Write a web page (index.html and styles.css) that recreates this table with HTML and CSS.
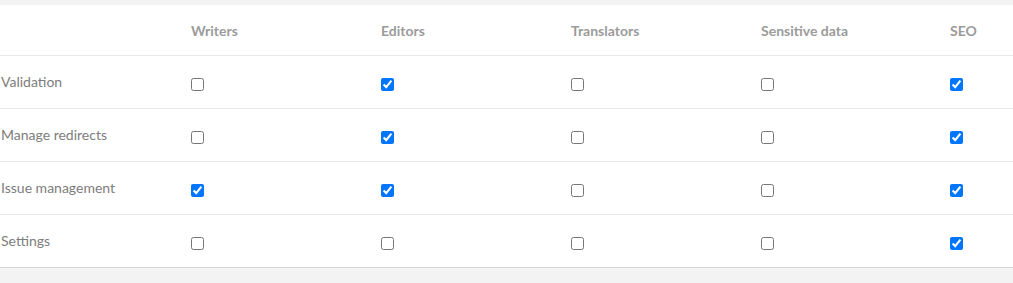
FILE: index.html
```html
<!DOCTYPE html>
<html>
<head>
<meta charset="utf-8">
<link rel="stylesheet" href="styles.css">
</head>
<body>
<div class="table">
  <div class="row head">
    <div class="cell label"></div>
    <div class="cell th">Writers</div>
    <div class="cell th">Editors</div>
    <div class="cell th">Translators</div>
    <div class="cell th">Sensitive data</div>
    <div class="cell th">SEO</div>
  </div>
  <div class="row">
    <div class="cell label">Validation</div>
    <div class="cell box"><input type="checkbox"></div>
    <div class="cell box"><input type="checkbox" checked></div>
    <div class="cell box"><input type="checkbox"></div>
    <div class="cell box"><input type="checkbox"></div>
    <div class="cell box"><input type="checkbox" checked></div>
  </div>
  <div class="row">
    <div class="cell label">Manage redirects</div>
    <div class="cell box"><input type="checkbox"></div>
    <div class="cell box"><input type="checkbox" checked></div>
    <div class="cell box"><input type="checkbox"></div>
    <div class="cell box"><input type="checkbox"></div>
    <div class="cell box"><input type="checkbox" checked></div>
  </div>
  <div class="row">
    <div class="cell label">Issue management</div>
    <div class="cell box"><input type="checkbox" checked></div>
    <div class="cell box"><input type="checkbox" checked></div>
    <div class="cell box"><input type="checkbox"></div>
    <div class="cell box"><input type="checkbox"></div>
    <div class="cell box"><input type="checkbox" checked></div>
  </div>
  <div class="row">
    <div class="cell label">Settings</div>
    <div class="cell box"><input type="checkbox"></div>
    <div class="cell box"><input type="checkbox"></div>
    <div class="cell box"><input type="checkbox"></div>
    <div class="cell box"><input type="checkbox"></div>
    <div class="cell box"><input type="checkbox" checked></div>
  </div>
</div>
</body>
</html>
```

FILE: styles.css
```css
html, body {
  margin: 0;
  padding: 0;
  background: #f4f3f3;
  font-family: Lato, "Liberation Sans", sans-serif;
  font-size: 14px;
}
.table {
  margin-top: 5px;
  background: #ffffff;
  border-bottom: 1px solid #d6d6d6;
}
.row {
  display: grid;
  grid-template-columns: 191px 190px 190px 190px 189px 1fr;
  height: 52px;
  border-top: 1px solid #e8e8e8;
}
.row.head {
  height: 50px;
  border-top: none;
}
.cell {
  display: flex;
  align-items: center;
}
.label {
  padding-left: 1px;
  color: #7d7d7d;
  padding-bottom: 2px;
}
.th {
  color: #9b9b9b;
  font-weight: bold;
}
.box {
  align-items: flex-start;
  padding-top: 22px;
}
.box input {
  margin: 0;
  width: 13px;
  height: 13px;
}
```
